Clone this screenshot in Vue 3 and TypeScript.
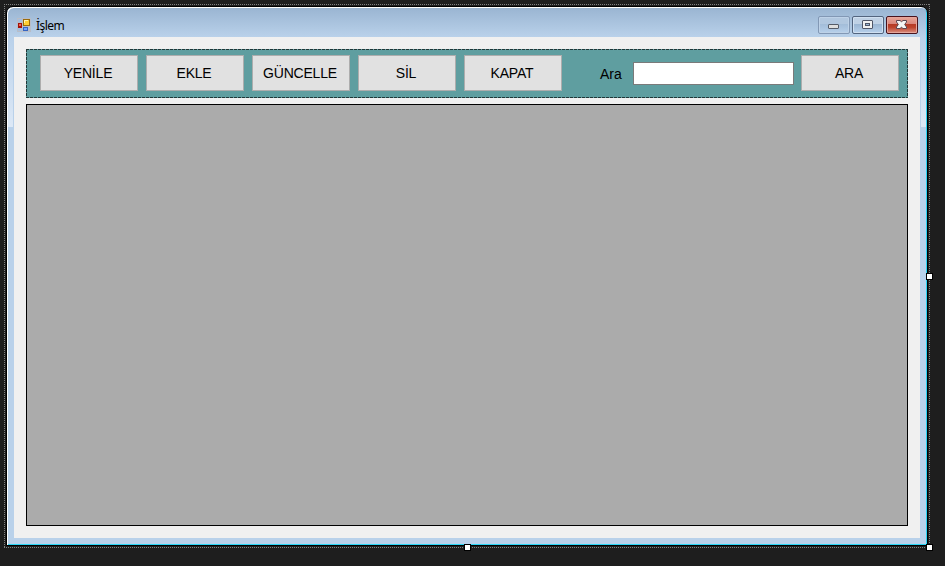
<script setup lang="ts">
import { ref } from 'vue'

const actions: string[] = ['YENİLE', 'EKLE', 'GÜNCELLE', 'SİL', 'KAPAT']
const query = ref<string>('')
</script>

<template>
  <main class="designer">
    <section class="selection">
      <svg class="outline" width="926" height="544" aria-hidden="true">
        <path d="M0 .5H926M0 543.5H926M.5 0V544M925.5 0V544" />
      </svg>
      <div class="window">
        <header class="titlebar">
          <svg class="app-icon" width="14" height="14" viewBox="0 0 14 14" shape-rendering="crispEdges">
            <rect width="14" height="14" fill="#b8bdc7" />
            <path d="M1 1h4v3H1zM1 10h4v3H1z" fill="#a7bfdd" />
            <rect x="1" y="5" width="4" height="5" fill="#a31208" />
            <rect x="2" y="6" width="2" height="2" fill="#ef6655" />
            <rect x="6" y="1" width="7" height="7" fill="#9b6b0b" />
            <rect x="7" y="2" width="5" height="5" fill="#ffcf32" />
            <path d="M7 2h4v1H8v2H7z" fill="#fff1ad" />
            <rect x="6" y="9" width="5" height="4" fill="#3565c2" />
            <rect x="7" y="10" width="3" height="2" fill="#75a5ff" />
          </svg>
          <h1 class="title">İşlem</h1>
          <div class="captions">
            <button class="caption minimize" aria-label="Simge durumuna küçült">
              <svg width="30" height="16" viewBox="0 0 30 16">
                <rect x="9.5" y="7.5" width="10" height="4" rx=".5" fill="#dedede" stroke="#555c68" />
              </svg>
            </button>
            <button class="caption" aria-label="Ekranı kapla">
              <svg width="30" height="16" viewBox="0 0 30 16">
                <rect x="9.5" y="3.5" width="10" height="8" rx=".5" fill="#f1f1f1" stroke="#4f5668" />
                <rect x="12.5" y="6.5" width="4" height="2" fill="#9ab7d5" stroke="#4f5668" />
              </svg>
            </button>
            <button class="caption close" aria-label="Kapat">
              <svg width="30" height="16" viewBox="0 0 30 16">
                <path d="M9.5 3.5H13L14.5 4.7L16 3.5H19.5V5L17.7 7.5L19.5 10V11.5H16L14.5 10.3L13 11.5H9.5V10L11.3 7.5L9.5 5Z" fill="#f5f5f5" stroke="#5b4752" />
              </svg>
            </button>
          </div>
        </header>
        <div class="client">
          <nav class="toolbar">
            <svg class="toolbar-outline" width="882" height="49" aria-hidden="true">
              <path d="M0 .5H882M0 48.5H882M.5 0V49M881.5 0V49" />
            </svg>
            <button v-for="action in actions" :key="action" class="action">{{ action }}</button>
            <label class="search-label" for="search">Ara</label>
            <input id="search" v-model="query" class="search" type="text" />
            <button class="action">ARA</button>
          </nav>
          <div class="grid"></div>
        </div>
      </div>
      <i class="handle right"></i>
      <i class="handle bottom"></i>
      <i class="handle corner"></i>
    </section>
  </main>
</template>

<style>
body {
  background: #1e1e1e;
  overflow: hidden;
}
</style>

<style scoped>
* {
  box-sizing: border-box;
}
.designer {
  height: 566px;
  padding: 4px;
  background: #1e1e1e;
}
.selection {
  position: relative;
  width: 926px;
  height: 544px;
  padding: 2px;
}
.outline {
  position: absolute;
  left: 0;
  top: 0;
}
.outline path {
  stroke: #808080;
  stroke-dasharray: 1 1;
}
.window {
  position: relative;
  width: 922px;
  height: 540px;
  padding: 0 7px 7px;
  border: 1px solid #000;
  border-radius: 7px 7px 0 0;
  background:
    linear-gradient(#b9d1ea, #dce8f6) 1px 30px / 5px 90px no-repeat,
    linear-gradient(#b9d1ea, #dce8f6) 914px 30px / 5px 90px no-repeat,
    linear-gradient(#99b4d1 0, #b9d1ea 30px, #b9d1ea 100%);
  box-shadow: inset 1px 1px #fff, inset -1px -1px #29d5f5;
}
.titlebar {
  display: flex;
  height: 30px;
  margin-right: -6px;
  padding: 9px 8px 0 3px;
}
.app-icon {
  margin-top: 2px;
}
.title {
  margin: 0 0 0 5px;
  font: 400 12px/20px "Noto Sans", sans-serif;
  letter-spacing: -0.55px;
  color: #000;
}
.captions {
  display: flex;
  gap: 2px;
  margin-left: auto;
}
.caption {
  width: 32px;
  height: 18px;
  padding: 0;
  border: 1px solid #53657f;
  border-radius: 2px;
  background: linear-gradient(#bfd1e5 0 45%, #9bb6d3 46%, #b7d0eb);
  box-shadow: inset 0 0 0 1px #d0e0f1;
}
.caption svg {
  display: block;
}
.minimize {
  border-color: #8298b5;
  background: linear-gradient(#b1c7df 0 45%, #a3bdd9 46%, #b7d0eb);
  box-shadow: inset 0 0 0 1px #bed2e8;
}
.close {
  border-color: #48131d;
  background: linear-gradient(#e8a799, #d9847a 45%, #b53a25 46%, #bd432d 65%, #d99183);
  box-shadow: inset 0 0 0 1px #e6a69b;
}
.client {
  width: 906px;
  height: 501px;
  padding: 12px;
  background: #f0f0f0;
}
.toolbar {
  position: relative;
  display: flex;
  width: 882px;
  height: 49px;
  gap: 8px;
  padding: 6px 9px 7px 14px;
  background: #5f9ea0;
}
.toolbar-outline {
  position: absolute;
  left: 0;
  top: 0;
}
.toolbar-outline path {
  stroke: #213738;
  stroke-dasharray: 3 1;
}
.action {
  width: 98px;
  height: 36px;
  padding: 0 2px 0 0;
  border: 1px solid #adadad;
  background: #e1e1e1;
  font: 14px/16px "Liberation Sans", Arial, sans-serif;
  letter-spacing: -0.2px;
  color: #000;
}
.search-label {
  width: 25px;
  margin-left: 30px;
  font: 14px/39px "Liberation Sans", Arial, sans-serif;
}
.search {
  width: 161px;
  height: 23px;
  margin: 7px -1px 0 0;
  padding: 2px;
  border: 1px solid #7a7a7a;
  border-radius: 0;
  background: #fff;
  font: 14px "Liberation Sans", Arial, sans-serif;
  outline: none;
}
.grid {
  width: 882px;
  height: 422px;
  margin-top: 6px;
  border: 1px solid #000;
  background: #ababab;
}
.handle {
  position: absolute;
  width: 7px;
  height: 7px;
  border: 1px solid #000;
  background: #fff;
}
.right {
  left: 922px;
  top: 269px;
}
.bottom {
  left: 460px;
  top: 540px;
}
.corner {
  left: 922px;
  top: 540px;
}
</style>
